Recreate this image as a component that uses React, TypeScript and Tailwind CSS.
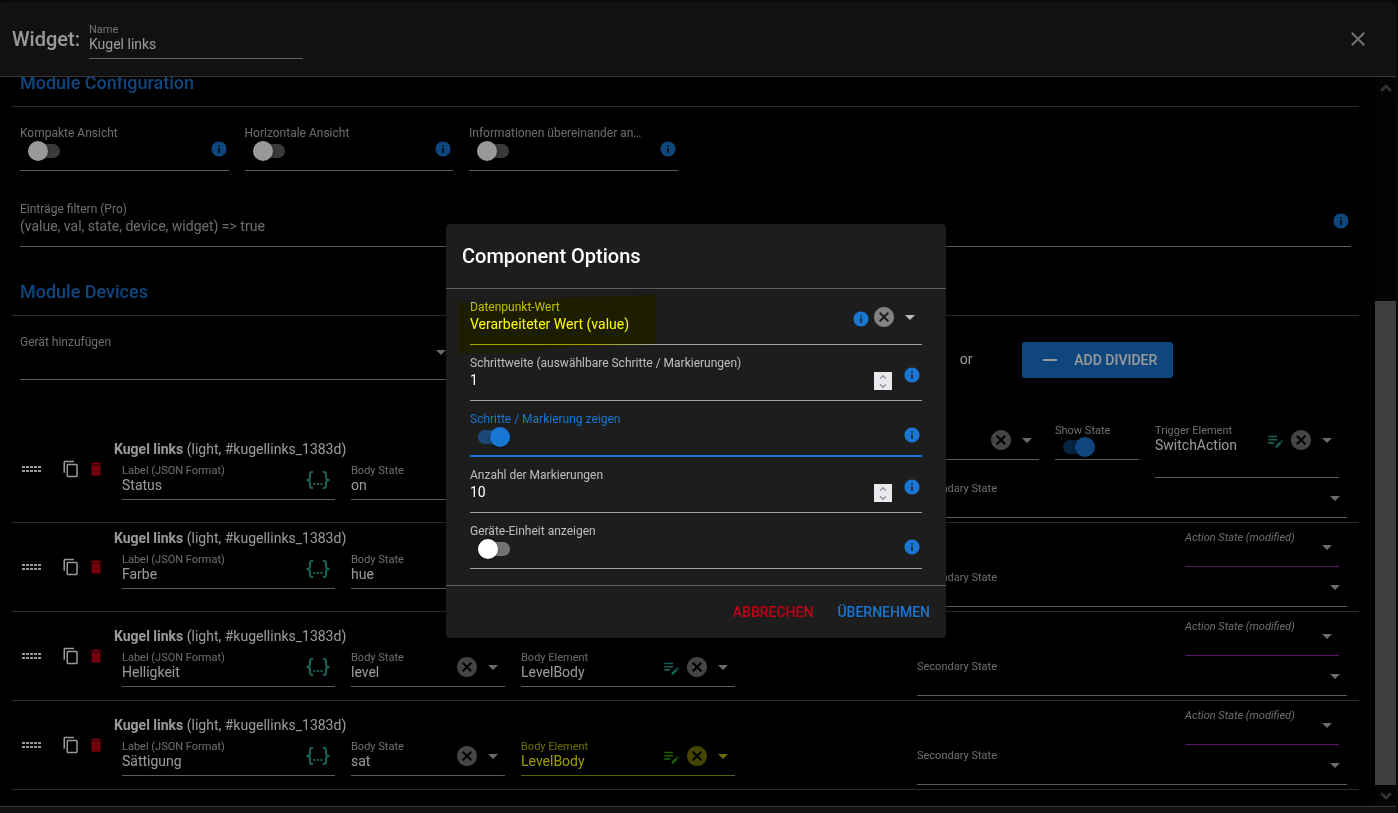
import React, { useId, useState } from 'react';
import { ChevronDown, ChevronUp } from 'lucide-react';
import {
  MdArrowDropDown,
  MdCancel,
  MdClose,
  MdContentCopy,
  MdDelete,
  MdEditNote,
  MdInfo,
  MdRemove,
} from 'react-icons/md';

const InfoIcon = ({ className = '' }: { className?: string }) => (
  <button type="button" aria-label="Info" className={`text-[#1976d2] ${className}`}>
    <MdInfo size={18} />
  </button>
);

const ClearIcon = () => (
  <button type="button" aria-label="Clear" className="text-white/45">
    <MdCancel size={24} />
  </button>
);

const JsonIcon = () => (
  <svg width="24" height="20" viewBox="0 0 24 20" fill="none" stroke="#26a69a" strokeWidth="2">
    <path d="M7 2H6a2 2 0 0 0-2 2v3.500Q4 10 0.500 10Q4 10 4 12.500V16a2 2 0 0 0 2 2h1" />
    <path d="M17 2h1a2 2 0 0 1 2 2v3.500Q20 10 23.500 10Q20 10 20 12.500V16a2 2 0 0 1-2 2h-1" />
    <path d="M7.500 14h2M11 14h2M14.500 14h2" />
  </svg>
);

const DragDots = () => (
  <svg width="20" height="7" viewBox="0 0 20 7" fill="#ffffff">
    {[0, 4, 8, 12, 16].map((x) => (
      <React.Fragment key={x}>
        <rect x={x} y="0" width="3" height="2" />
        <rect x={x} y="4" width="3" height="2" />
      </React.Fragment>
    ))}
  </svg>
);

interface FieldProps {
  label: string;
  id: string;
  dense?: boolean;
  className?: string;
  labelClass?: string;
  after?: React.ReactNode;
  children?: React.ReactNode;
}

const Field = ({
  label,
  id,
  dense,
  className = 'border-white/60',
  labelClass = 'text-white/70',
  after,
  children,
}: FieldProps) => (
  <div className={`relative flex border-b ${dense ? 'min-h-10' : 'min-h-14'} ${className}`}>
    <div className={`min-w-0 flex-1 ${dense ? 'pt-[5px]' : 'pt-2.5'}`}>
      <label
        htmlFor={id}
        className={`block whitespace-nowrap ${dense ? 'h-3 text-[11px] leading-3' : 'truncate text-xs leading-4'} ${labelClass}`}
      >
        {label}
      </label>
      {children}
    </div>
    {after && <div className={`-mb-px flex items-center ${dense ? 'h-10' : 'h-14'}`}>{after}</div>}
  </div>
);

interface ToggleFieldProps {
  label: string;
  defaultChecked?: boolean;
  dense?: boolean;
  focused?: boolean;
}

const ToggleField = ({ label, defaultChecked = false, dense, focused }: ToggleFieldProps) => {
  const id = useId();
  const [checked, setChecked] = useState(defaultChecked);

  return (
    <Field
      id={id}
      label={label}
      dense={dense}
      className={focused ? 'border-[#1976d2] shadow-[inset_0_-1px_0_#1976d2]' : 'border-white/60'}
      labelClass={focused ? 'text-[#1976d2]' : 'text-white/70'}
      after={!dense && <InfoIcon className="pt-3 pr-px" />}
    >
      <label className="ml-2 flex h-5 w-8 cursor-pointer items-center">
        <input
          id={id}
          type="checkbox"
          className="sr-only"
          checked={checked}
          onChange={(e) => setChecked(e.target.checked)}
        />
        <span
          className={`flex h-3.5 w-8 items-center rounded-full ${
            checked ? 'justify-end bg-[#1976d2]/50' : 'justify-start bg-white/38'
          }`}
        >
          <span
            className={`size-5 shrink-0 rounded-full shadow-[0_1px_3px_rgba(0,0,0,0.4)] ${
              checked ? 'bg-[#1976d2]' : 'bg-white'
            }`}
          />
        </span>
      </label>
    </Field>
  );
};

interface TextFieldProps {
  label: string;
  value?: string;
  placeholder?: string;
  dense?: boolean;
  after?: React.ReactNode;
}

const TextField = ({ label, value = '', placeholder, dense, after }: TextFieldProps) => {
  const id = useId();
  return (
    <Field id={id} label={label} dense={dense} after={after}>
      <input
        id={id}
        type="text"
        defaultValue={value}
        placeholder={placeholder}
        className={`block w-full bg-transparent text-sm text-white outline-none placeholder:text-white/70 ${dense ? 'h-4' : 'h-[18px]'}`}
      />
    </Field>
  );
};

const NumberField = ({ label, defaultValue }: { label: string; defaultValue: number }) => {
  const id = useId();
  const [value, setValue] = useState(defaultValue);

  return (
    <Field id={id} label={label} after={<InfoIcon className="ml-[11px] pt-1 pr-px" />}>
      <div className="flex justify-between">
        <input
          id={id}
          type="number"
          value={value}
          onChange={(e) => setValue(Number(e.target.value))}
          className="h-[18px] min-w-0 flex-1 appearance-none bg-transparent text-sm text-white outline-none [-moz-appearance:textfield] [&::-webkit-inner-spin-button]:appearance-none"
        />
        <span className="mt-px flex h-[18px] w-[18px] flex-col bg-[#e9e9ed] text-[#8f8f9d]">
          <button type="button" aria-label="Increase" className="flex h-[9px] items-center justify-center" onClick={() => setValue(value + 1)}>
            <ChevronUp size={10} strokeWidth={3} />
          </button>
          <button type="button" aria-label="Decrease" className="flex h-[9px] items-center justify-center" onClick={() => setValue(value - 1)}>
            <ChevronDown size={10} strokeWidth={3} />
          </button>
        </span>
      </div>
    </Field>
  );
};

interface SelectFieldProps {
  label: string;
  value?: string;
  dense?: boolean;
  info?: boolean;
  editable?: boolean;
  clearable?: boolean;
  className?: string;
  labelClass?: string;
  marker?: React.ReactNode;
}

const SelectField = ({
  label,
  value = '',
  dense,
  info,
  editable,
  clearable,
  className,
  labelClass,
  marker,
}: SelectFieldProps) => {
  const id = useId();
  return (
    <Field
      id={id}
      label={label}
      dense={dense}
      className={className}
      labelClass={labelClass}
      after={
        <>
          {info && <InfoIcon className="mr-0.5 pt-1" />}
          {editable && (
            <button type="button" aria-label="Edit" className="mr-1 text-[#26a69a]">
              <MdEditNote size={19} />
            </button>
          )}
          {clearable && <ClearIcon />}
          <MdArrowDropDown size={24} className="ml-0.5 text-white/70" />
          {marker}
        </>
      }
    >
      <select
        id={id}
        defaultValue={value}
        className={`block w-full appearance-none bg-transparent text-sm text-white outline-none ${dense ? 'h-4 leading-4' : 'h-[18px] leading-[18px]'}`}
      >
        <option>{value}</option>
      </select>
    </Field>
  );
};

const SectionTitle = ({ children }: { children: React.ReactNode }) => (
  <h2 className="border-b border-white/28 px-2 pb-[9px] text-lg leading-7 font-medium text-[#1976d2]">{children}</h2>
);

interface Device {
  label: string;
  state: string;
  element?: string;
  marked?: boolean;
  trigger?: string;
  tall?: boolean;
}

const devices: Device[] = [
  { label: 'Status', state: 'on', trigger: 'SwitchAction' },
  { label: 'Farbe', state: 'hue', tall: true },
  { label: 'Helligkeit', state: 'level', element: 'LevelBody' },
  { label: 'Sättigung', state: 'sat', element: 'LevelBody', marked: true },
];

const DeviceRow = ({ device }: { device: Device }) => (
  <div className="grid grid-cols-[94px_minmax(0,779fr)_minmax(0,430fr)] items-center gap-4 border-b border-white/28 py-1 pr-3">
    <div className="flex items-center pl-2.5 text-white">
      <DragDots />
      <button type="button" aria-label="Copy" className="ml-5">
        <MdContentCopy size={18} />
      </button>
      <button type="button" aria-label="Delete" className="ml-[7px] text-[#c10015]">
        <MdDelete size={18} />
      </button>
    </div>

    <div className={device.tall ? 'pb-[18px]' : ''}>
      <div className="-ml-2 text-sm leading-[22px] text-white">
        <b>Kugel links</b> (light, #kugellinks_1383d)
      </div>
      <div className="grid grid-cols-[213fr_154fr_214fr_150fr] gap-4">
        <TextField
          dense
          label="Label (JSON Format)"
          value={device.label}
          after={
            <button type="button" aria-label="JSON" className="mr-[5px]">
              <JsonIcon />
            </button>
          }
        />
        <SelectField dense clearable label="Body State" value={device.state} />
        {device.element && (
          <SelectField
            dense
            editable
            clearable
            label="Body Element"
            value={device.element}
            marker={
              device.marked && (
                <span className="pointer-events-none absolute -top-1 right-[3px] -bottom-3.5 -left-[18px] bg-[#ffff00] mix-blend-multiply" />
              )
            }
          />
        )}
      </div>
    </div>

    <div>
      {device.trigger ? (
        <div className="grid grid-cols-[122fr_84fr_184fr] items-start gap-4 pr-2">
          <SelectField dense clearable label="" />
          <ToggleField dense defaultChecked label="Show State" />
          <SelectField
            dense
            editable
            clearable
            label="Trigger Element"
            value={device.trigger}
            className="border-white/60 pb-[18px]"
          />
        </div>
      ) : (
        <div className="ml-auto w-[162px] pr-2">
          <SelectField dense label="Action State (modified)" className="border-[#9c27b0]" labelClass="italic text-white/70" />
        </div>
      )}
      <SelectField dense label="Secondary State" />
    </div>
  </div>
);

const Scrollbar = () => (
  <div className="flex w-[21px] shrink-0 flex-col bg-[#050505] text-[#555555]">
    <button type="button" aria-label="Scroll up" className="flex h-[21px] items-center justify-center bg-[#08080a]">
      <ChevronUp size={16} strokeWidth={4} />
    </button>
    <div className="flex-203" />
    <div className="flex-484 bg-[#696969]" />
    <button type="button" aria-label="Scroll down" className="flex h-[21px] items-center justify-center bg-[#08080a]">
      <ChevronDown size={16} strokeWidth={4} />
    </button>
  </div>
);

const OptionsDialog = () => (
  <div className="fixed inset-0 flex items-start justify-center bg-black/40 pt-56 pr-1.5">
    <div role="dialog" aria-label="Component Options" className="w-[500px] rounded bg-[#1d1d1d] shadow-xl">
      <h1 className="border-b border-white/28 px-4 py-[18px] text-xl leading-7 font-medium text-white">Component Options</h1>
      <div className="border-b border-white/28 px-6 pb-4">
        <SelectField
          info
          clearable
          label="Datenpunkt-Wert"
          value="Verarbeiteter Wert (value)"
          marker={
            <svg className="pointer-events-none absolute top-1.5 -left-3 mix-blend-multiply" width="198" height="58" viewBox="0 0 198 58">
              <path d="M0 8H45L117 2L170 1L198 0V49L135 50L95 54L58 58H0Z" fill="#ffff00" />
            </svg>
          }
        />
        <NumberField label="Schrittweite (auswählbare Schritte / Markierungen)" defaultValue={1} />
        <ToggleField focused defaultChecked label="Schritte / Markierung zeigen" />
        <NumberField label="Anzahl der Markierungen" defaultValue={10} />
        <ToggleField label="Geräte-Einheit anzeigen" />
      </div>
      <div className="flex justify-end gap-2 p-2 text-sm font-medium">
        <button type="button" className="h-9 px-2 text-[#c10015]">
          ABBRECHEN
        </button>
        <button type="button" className="h-9 px-2 text-[#1976d2]">
          ÜBERNEHMEN
        </button>
      </div>
    </div>
  </div>
);

export default function App() {
  return (
    <div className="h-screen overflow-hidden bg-[#101010] pt-0.5 pr-0.5 font-['Roboto','Liberation_Sans',sans-serif]">
      <div className="flex h-full flex-col overflow-hidden rounded-t bg-black">
        <header className="flex items-center border-b border-white/28 bg-[#1d1d1d] py-[17px] pr-[26px] pl-3">
          <h1 className="text-xl font-medium text-white">Widget:</h1>
          <div className="ml-[9px] w-[214px]">
            <TextField dense label="Name" value="Kugel links" />
          </div>
          <button type="button" aria-label="Close" className="ml-auto text-white/70">
            <MdClose size={24} />
          </button>
        </header>

        <div className="flex min-h-0 flex-1">
          <main className="min-w-0 flex-1 overflow-hidden pr-4 pl-3">
            <div className="-mt-2">
              <SectionTitle>Module Configuration</SectionTitle>
            </div>
            <div className="grid grid-cols-6 pt-2">
              {['Kompakte Ansicht', 'Horizontale Ansicht', 'Informationen übereinander an…'].map((label) => (
                <div key={label} className="px-2">
                  <ToggleField label={label} />
                </div>
              ))}
            </div>
            <div className="px-2 pt-5">
              <TextField
                label="Einträge filtern (Pro)"
                placeholder="(value, val, state, device, widget) => true"
                after={<InfoIcon className="pt-1 pr-px" />}
              />
            </div>

            <div className="pt-[31px]">
              <SectionTitle>Module Devices</SectionTitle>
            </div>
            <div className="grid grid-cols-12 items-center pt-2">
              <div className="col-span-4 px-2">
                <SelectField label="Gerät hinzufügen" />
              </div>
              <span className="col-start-9 mt-3.5 text-center text-sm text-white">or</span>
              <button
                type="button"
                className="col-span-3 mt-4 flex h-9 items-center gap-3 justify-self-start rounded-[3px] bg-[#1976d2] px-4 text-sm font-medium whitespace-nowrap text-white"
              >
                <MdRemove size={24} />
                ADD DIVIDER
              </button>
            </div>

            <div className="pt-9">
              {devices.map((device) => (
                <DeviceRow key={device.label} device={device} />
              ))}
            </div>
          </main>
          <Scrollbar />
        </div>

        <footer className="h-[7px] shrink-0 border-t border-white/28 bg-[#1d1d1d]" />
      </div>
      <OptionsDialog />
    </div>
  );
}
